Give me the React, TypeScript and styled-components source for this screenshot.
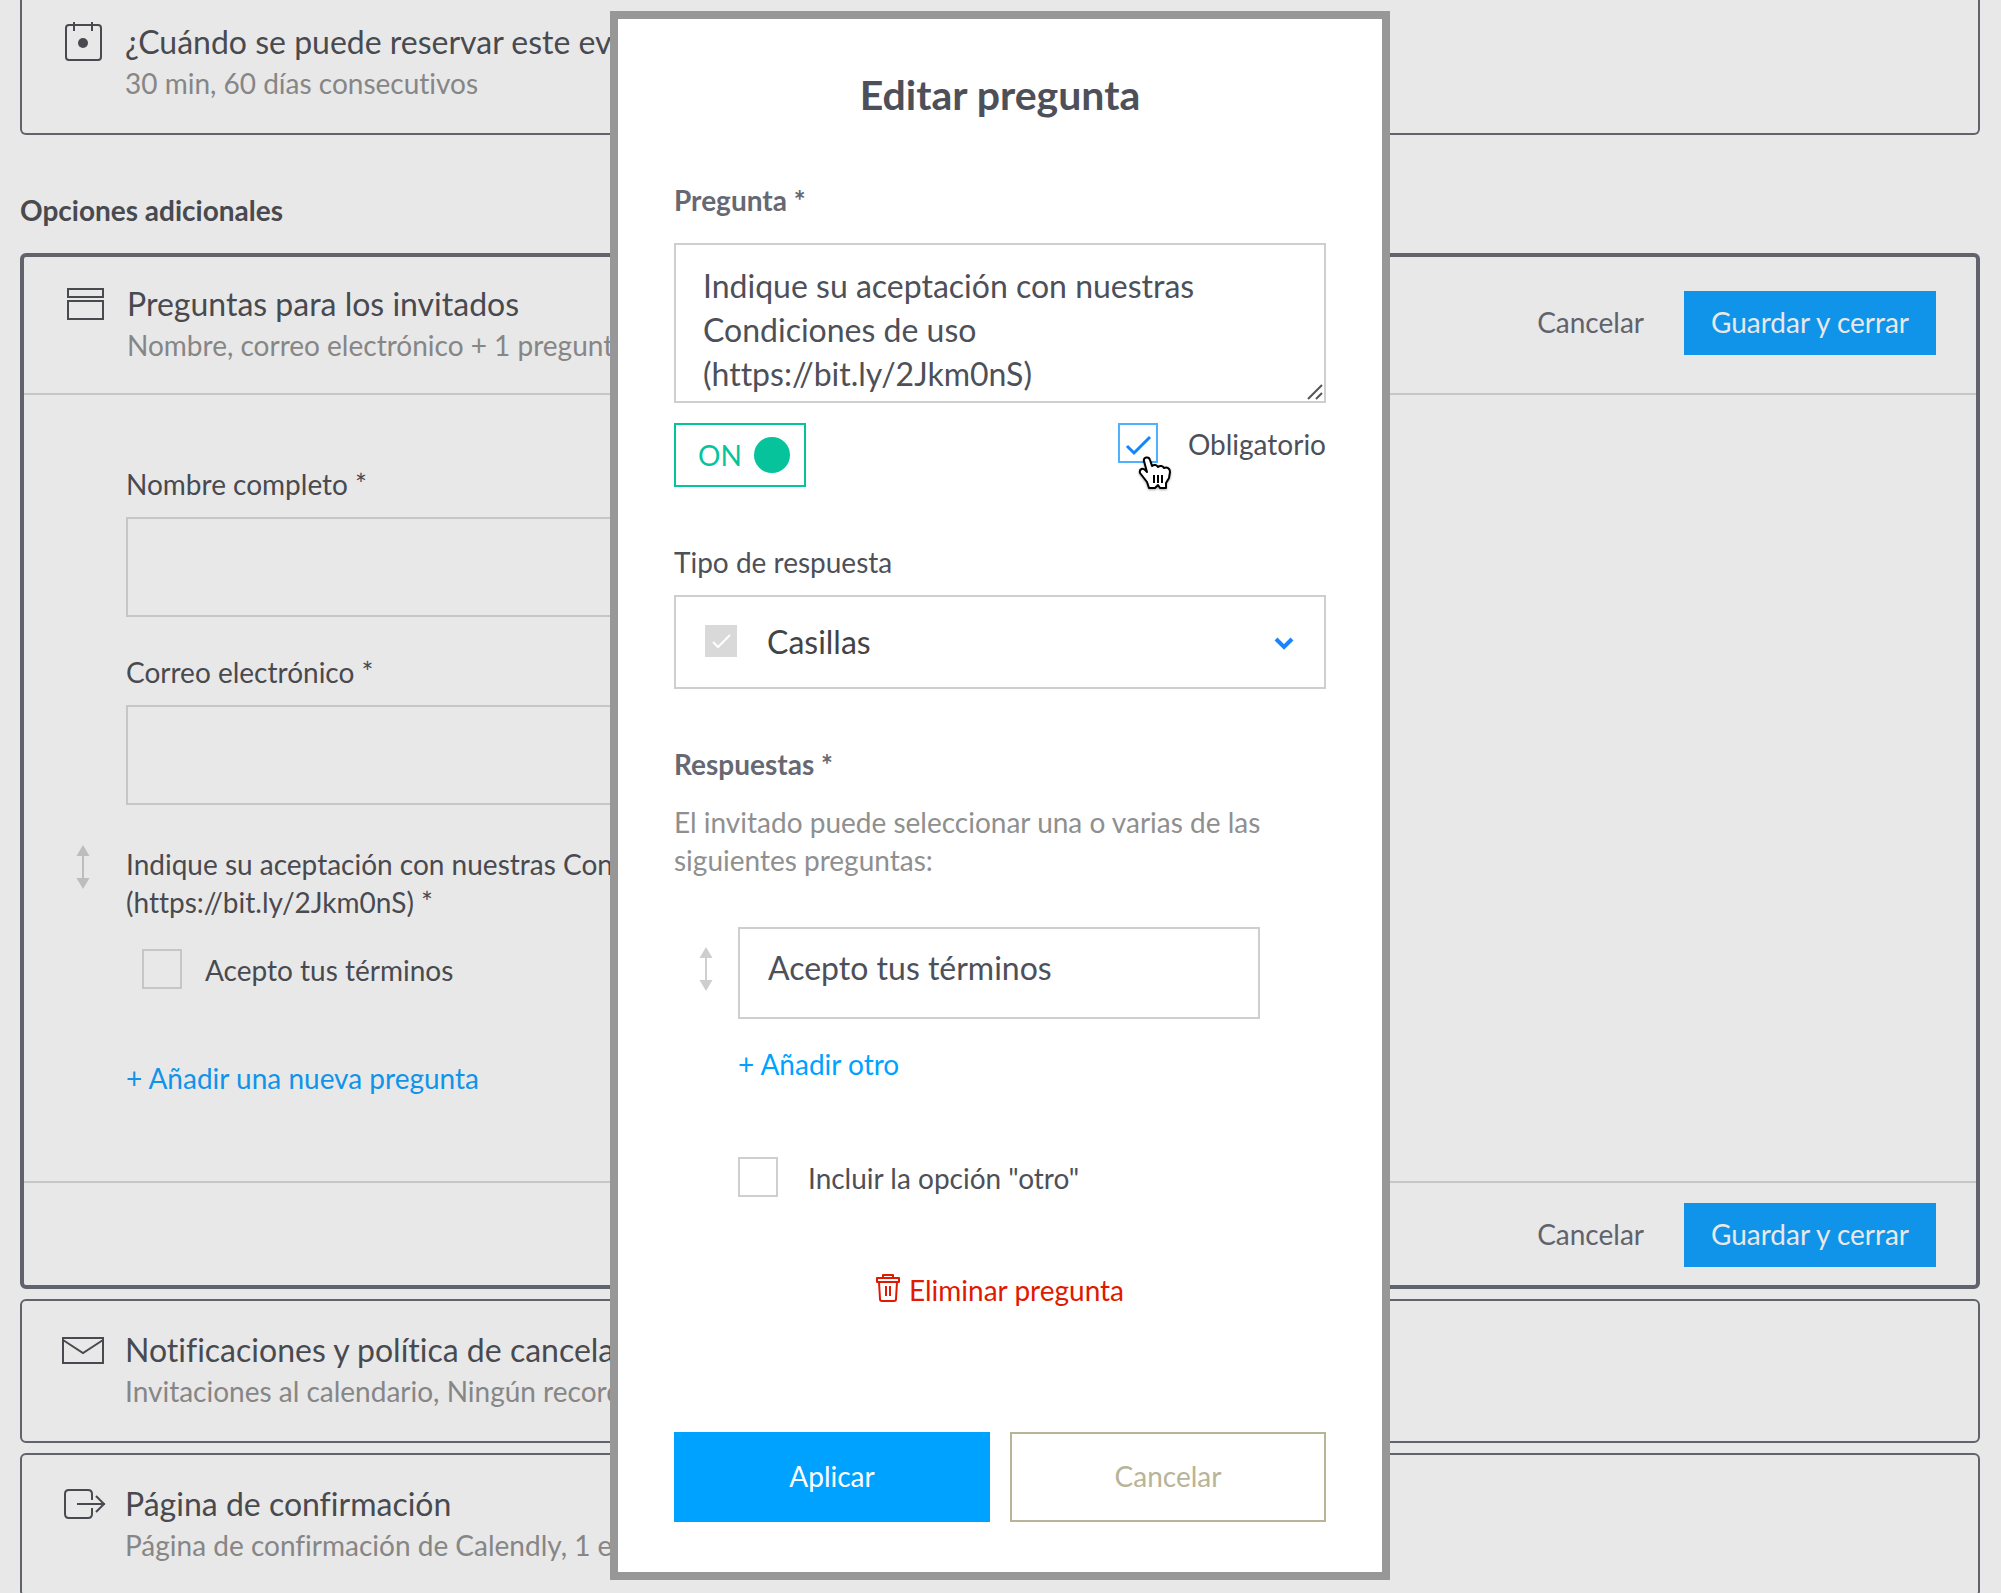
import React from "react";
import styled, { createGlobalStyle, css } from "styled-components";

const GlobalStyle = createGlobalStyle`
  *, *::before, *::after { box-sizing: border-box; }
  body {
    margin: 0;
    background: #e8e8e8;
    color: #484a50;
    font-family: Lato, "Liberation Sans", sans-serif;
    font-size: 28px;
    line-height: 38px;
    font-variant-ligatures: none;
  }
  button, input, select, textarea { font: inherit; color: inherit; margin: 0; border-radius: 0; }
  h1, h2, h3, p { margin: 0; font-weight: 400; }
`;

/* ---------- Page behind the dialog ---------- */

const Page = styled.main`
  height: 100vh;
  overflow: hidden;
  padding: 0 21px 0 20px;
`;

const Card = styled.section<{ $active?: boolean; $cutTop?: boolean }>`
  border: ${(p) => (p.$active ? 4 : 2)}px solid #60626c;
  border-radius: 6px;
  margin-bottom: 10px;
  ${(p) =>
    p.$cutTop &&
    css`
      border-top: 0;
      border-top-left-radius: 0;
      border-top-right-radius: 0;
      margin-bottom: 0;
    `}
`;

const CardHeader = styled.header<{ $variant?: "active" | "cut" }>`
  display: flex;
  align-items: center;
  gap: 19px;
  padding: ${(p) =>
    p.$variant === "active"
      ? "24px 40px 29px"
      : p.$variant === "cut"
        ? "19px 40px 31px"
        : "26px 40px 31px"};
  ${(p) => p.$variant === "active" && "border-bottom: 2px solid #c6c6c6;"}
`;

const CardIcon = styled.svg`
  flex: none;
  align-self: flex-start;
  width: 44px;
  height: 44px;
  fill: none;
  stroke: #484a50;
  stroke-width: 2;
`;

const CardHeading = styled.div`
  flex: 1;
  min-width: 0;
  padding-top: 1px;
`;

const CardTitle = styled.h3`
  font-size: 32px;
  line-height: 44px;
`;

const CardSummary = styled.p`
  color: #868686;
`;

const SectionTitle = styled.h2`
  margin: 56px 0 24px;
  font-size: 28px;
  font-weight: 700;
`;

const Actions = styled.div`
  display: flex;
  align-items: center;
  gap: 40px;
`;

const PlainButton = styled.button`
  border: 0;
  padding: 0 0 2px;
  background: none;
  color: #60626c;
  cursor: pointer;
`;

const SaveButton = styled.button`
  min-width: 252px;
  height: 64px;
  border: 0;
  padding: 0 24px 2px;
  background: #0f94ea;
  color: #e8e8e8;
  cursor: pointer;
`;

const CardBody = styled.div`
  display: flex;
  flex-direction: column;
  gap: 36px;
  padding: 70px 0 84px;
`;

const FormRow = styled.div`
  display: grid;
  grid-template-columns: 102px minmax(0, 850px);
`;

const HandleCell = styled.div`
  padding: 4px 0 0 52px;
`;

const FieldCell = styled.div`
  display: flex;
  flex-direction: column;
  gap: 14px;
  grid-column: 2;
`;

const PageInput = styled.input`
  height: 100px;
  border: 2px solid #c6c6c6;
  padding: 0 28px;
  background: transparent;
`;

const QuestionCell = styled.div`
  display: flex;
  flex-direction: column;
  align-items: flex-start;
  gap: 28px;
  padding-top: 4px;
`;

const QuestionOption = styled.div`
  display: flex;
  padding-left: 16px;
`;

const LinkRow = styled.div`
  grid-column: 2;
  padding-top: 34px;
`;

const LinkButton = styled.button<{ $muted?: boolean }>`
  display: block;
  border: 0;
  padding: 0;
  background: none;
  color: ${(p) => (p.$muted ? "#0f94ea" : "#00a2ff")};
  cursor: pointer;
`;

const CardFooter = styled.footer`
  display: flex;
  justify-content: flex-end;
  border-top: 2px solid #c6c6c6;
  padding: 20px 40px 18px;
`;

/* ---------- Shared controls ---------- */

const HandleSvg = styled.svg<{ $light?: boolean }>`
  display: block;
  width: 14px;
  height: 44px;
  color: ${(p) => (p.$light ? "#cecece" : "#bdbdbd")};
`;

function DragHandle({ light }: { light?: boolean }) {
  return (
    <HandleSvg $light={light} viewBox="0 0 14 44" aria-hidden="true">
      <path d="M7 0l6.500 11H.5zM7 44l6.500-11H.5z" fill="currentColor" />
      <path d="M7 10v24" stroke="currentColor" strokeWidth="2" />
    </HandleSvg>
  );
}

const CheckLabel = styled.label<{ $gap: number }>`
  display: inline-flex;
  align-items: center;
  gap: ${(p) => p.$gap}px;
  cursor: pointer;
`;

const BoxStack = styled.span`
  display: grid;
  flex: none;
  width: 40px;
  height: 40px;
  & > * { grid-area: 1 / 1; }
`;

const BoxInput = styled.input<{ $dim?: boolean }>`
  appearance: none;
  width: 40px;
  height: 40px;
  border: 2px solid ${(p) => (p.$dim ? "#c6c6c6" : "#cecece")};
  background: transparent;
  cursor: pointer;
  &:checked { border-color: #4db1ff; }
  & + svg { visibility: hidden; }
  &:checked + svg { visibility: visible; }
`;

const BoxTick = styled.svg`
  width: 40px;
  height: 40px;
  fill: none;
  stroke: #0f85ff;
  stroke-width: 3;
  pointer-events: none;
`;

const CheckText = styled.span`
  padding-top: 2px;
`;

function Checkbox(props: { label: string; gap: number; checked?: boolean; dim?: boolean }) {
  return (
    <CheckLabel $gap={props.gap}>
      <BoxStack>
        <BoxInput type="checkbox" defaultChecked={props.checked} $dim={props.dim} />
        <BoxTick viewBox="0 0 40 40" aria-hidden="true">
          <path d="M9 23l7 7L32 14" />
        </BoxTick>
      </BoxStack>
      <CheckText>{props.label}</CheckText>
    </CheckLabel>
  );
}

/* ---------- Dialog ---------- */

const Overlay = styled.div`
  position: absolute;
  inset: 0;
  display: flex;
  justify-content: center;
  align-items: flex-start;
  padding: 11px 1px 0 0;
  overflow: hidden;
`;

const Dialog = styled.form`
  display: flex;
  flex-direction: column;
  width: 780px;
  max-width: 100%;
  border: 8px solid #979797;
  padding: 54px 56px 50px;
  background: #fff;
  color: #4d5058;
`;

const DialogTitle = styled.h1`
  margin-bottom: 64px;
  font-size: 41px;
  line-height: 44px;
  font-weight: 700;
  text-align: center;
`;

const FieldLabel = styled.label<{ $strong?: boolean }>`
  align-self: flex-start;
  ${(p) => p.$strong && "color: #666872; font-weight: 700;"}
`;

const TextBox = styled.div`
  position: relative;
  display: flex;
  margin: 24px 0 20px;
`;

const QuestionText = styled.textarea`
  width: 100%;
  height: 160px;
  border: 2px solid #cecece;
  padding: 19px 27px 5px;
  background: #fff;
  font-size: 32px;
  line-height: 44px;
  resize: none;
  overflow: hidden;
`;

const Grip = styled.svg`
  position: absolute;
  right: 3px;
  bottom: 3px;
  width: 16px;
  height: 16px;
  stroke: #555;
  stroke-width: 2;
  pointer-events: none;
`;

const SettingsRow = styled.div`
  position: relative;
  display: flex;
  justify-content: space-between;
  align-items: flex-start;
  margin-bottom: 56px;
`;

const Switch = styled.button`
  display: flex;
  align-items: center;
  justify-content: space-between;
  width: 132px;
  height: 64px;
  border: 2px solid #06c39b;
  padding: 0 14px 0 22px;
  background: #fff;
  color: #06c39b;
  cursor: pointer;
`;

const SwitchKnob = styled.span`
  width: 36px;
  height: 36px;
  border-radius: 50%;
  background: #06c39b;
`;

const Pointer = styled.svg`
  position: absolute;
  top: 33px;
  right: 154px;
  width: 34px;
  height: 36px;
  filter: drop-shadow(0 1px 1px rgba(0, 0, 0, 0.35));
  pointer-events: none;
`;

const SelectBox = styled.div`
  display: grid;
  align-items: center;
  margin: 14px 0 56px;
  & > * { grid-area: 1 / 1; }
`;

const TypeSelect = styled.select`
  appearance: none;
  width: 100%;
  height: 94px;
  border: 2px solid #cecece;
  padding: 0 80px 0 91px;
  background: #fff;
  color: #444;
  font-size: 32px;
  cursor: pointer;
`;

const TypeIcon = styled.svg`
  width: 32px;
  height: 32px;
  margin: 0 0 2px 31px;
  pointer-events: none;
`;

const Chevron = styled.svg`
  justify-self: end;
  width: 20px;
  height: 14px;
  margin: 4px 32px 0 0;
  fill: none;
  stroke: #1a85ff;
  stroke-width: 4;
  pointer-events: none;
`;

const Help = styled.p`
  margin: 20px 0 48px;
  color: #8f8f8f;
`;

const AnswerList = styled.div`
  display: grid;
  grid-template-columns: 64px minmax(0, 522px);
  row-gap: 26px;
`;

const AnswerHandle = styled.div`
  padding: 20px 0 0 25px;
`;

const AnswerInput = styled.input`
  height: 92px;
  border: 2px solid #cecece;
  padding: 0 28px 12px;
  background: #fff;
  font-size: 32px;
`;

const AnswerExtras = styled.div`
  display: flex;
  flex-direction: column;
  align-items: flex-start;
  gap: 74px;
  grid-column: 2;
`;

const DeleteButton = styled.button`
  display: flex;
  align-items: center;
  align-self: center;
  gap: 9px;
  margin: 74px 0 123px;
  border: 0;
  padding: 0;
  background: none;
  color: #e11900;
  cursor: pointer;
`;

const TrashIcon = styled.svg`
  width: 24px;
  height: 28px;
  margin-bottom: 4px;
  fill: none;
  stroke: currentColor;
  stroke-width: 2;
  stroke-linejoin: round;
`;

const DialogActions = styled.div`
  display: grid;
  grid-template-columns: 1fr 1fr;
  gap: 20px;
`;

const DialogButton = styled.button<{ $primary?: boolean }>`
  height: 90px;
  border: 2px solid ${(p) => (p.$primary ? "#00a2ff" : "#b8b497")};
  padding: 0 0 2px;
  background: ${(p) => (p.$primary ? "#00a2ff" : "#fff")};
  color: ${(p) => (p.$primary ? "#fff" : "#b8b497")};
  cursor: pointer;
`;

function SaveActions() {
  return (
    <Actions>
      <PlainButton type="button">Cancelar</PlainButton>
      <SaveButton type="button">Guardar y cerrar</SaveButton>
    </Actions>
  );
}

function EditQuestionDialog() {
  return (
    <Overlay>
      <Dialog role="dialog" aria-labelledby="dialog-title" onSubmit={(e) => e.preventDefault()}>
        <DialogTitle id="dialog-title">Editar pregunta</DialogTitle>

        <FieldLabel $strong htmlFor="question">Pregunta *</FieldLabel>
        <TextBox>
          <QuestionText
            id="question"
            defaultValue={"Indique su aceptación con nuestras Condiciones de uso (https://bit.ly/2Jkm0nS)"}
          />
          <Grip viewBox="0 0 16 16" aria-hidden="true">
            <path d="M1 15L15 1M9 15l6-6" />
          </Grip>
        </TextBox>

        <SettingsRow>
          <Switch type="button" role="switch" aria-checked="true">
            ON
            <SwitchKnob />
          </Switch>
          <Checkbox label="Obligatorio" gap={30} checked />
          <Pointer viewBox="0 0 34 36" aria-hidden="true">
            <path
              d="M6 5C5 1 11 0 12 4l2 6c2-2 5-1 6 1 2-2 5-1 6 1 3-1 6 0 6 4l-1 6-3 5v5h-6l-2-3-3 3h-6l-2-6-7-9c-1-4 3-6 6-2l1 1z"
              fill="#fff"
              stroke="#000"
              strokeWidth="2"
              strokeLinejoin="round"
            />
            <path d="M16 19v8M20 19v8M24 19v8" stroke="#000" strokeWidth="2" />
          </Pointer>
        </SettingsRow>

        <FieldLabel htmlFor="answer-type">Tipo de respuesta</FieldLabel>
        <SelectBox>
          <TypeSelect id="answer-type" defaultValue="Casillas">
            <option>Casillas</option>
          </TypeSelect>
          <TypeIcon viewBox="0 0 32 32" aria-hidden="true">
            <path d="M0 0h32v32H0z" fill="#d9d9d9" />
            <path d="M8 17l5 5L25 10" fill="none" stroke="#fff" strokeWidth="2" />
          </TypeIcon>
          <Chevron viewBox="0 0 20 14" aria-hidden="true">
            <path d="M2 2l8 8 8-8" />
          </Chevron>
        </SelectBox>

        <FieldLabel $strong htmlFor="answer-1">Respuestas *</FieldLabel>
        <Help>El invitado puede seleccionar una o varias de las siguientes preguntas:</Help>

        <AnswerList>
          <AnswerHandle>
            <DragHandle light />
          </AnswerHandle>
          <AnswerInput id="answer-1" defaultValue="Acepto tus términos" />
          <AnswerExtras>
            <LinkButton type="button">+ Añadir otro</LinkButton>
            <Checkbox label={'Incluir la opción "otro"'} gap={30} />
          </AnswerExtras>
        </AnswerList>

        <DeleteButton type="button">
          <TrashIcon viewBox="0 0 24 28" aria-hidden="true">
            <path d="M1 4h22v4H1zM7 4V1h10v3M3 8l1 17q0 2 2 2h12q2 0 2-2l1-17M10 12v10M14 12v10" />
          </TrashIcon>
          Eliminar pregunta
        </DeleteButton>

        <DialogActions>
          <DialogButton $primary type="submit">Aplicar</DialogButton>
          <DialogButton type="button">Cancelar</DialogButton>
        </DialogActions>
      </Dialog>
    </Overlay>
  );
}

export default function App() {
  return (
    <>
      <GlobalStyle />
      <Page>
        <Card $cutTop>
          <CardHeader $variant="cut">
            <CardIcon viewBox="0 0 44 44" aria-hidden="true">
              <rect x="4" y="6" width="35" height="35" rx="3" />
              <path d="M12 3v9M30 3v9" />
              <circle cx="21" cy="24" r="5" fill="#484a50" stroke="none" />
            </CardIcon>
            <CardHeading>
              <CardTitle>¿Cuándo se puede reservar este evento?</CardTitle>
              <CardSummary>30 min, 60 días consecutivos</CardSummary>
            </CardHeading>
          </CardHeader>
        </Card>

        <SectionTitle>Opciones adicionales</SectionTitle>

        <Card $active>
          <CardHeader $variant="active">
            <CardIcon viewBox="0 0 44 44" aria-hidden="true">
              <path d="M4 8h35v8H4zM4 20h35v18H4z" />
            </CardIcon>
            <CardHeading>
              <CardTitle>Preguntas para los invitados</CardTitle>
              <CardSummary>Nombre, correo electrónico + 1 pregunta</CardSummary>
            </CardHeading>
            <SaveActions />
          </CardHeader>

          <CardBody>
            <FormRow>
              <FieldCell>
                <label htmlFor="full-name">Nombre completo *</label>
                <PageInput id="full-name" />
              </FieldCell>
            </FormRow>
            <FormRow>
              <FieldCell>
                <label htmlFor="email">Correo electrónico *</label>
                <PageInput id="email" type="email" />
              </FieldCell>
            </FormRow>
            <FormRow>
              <HandleCell>
                <DragHandle />
              </HandleCell>
              <QuestionCell>
                <p>Indique su aceptación con nuestras Condiciones de uso (https://bit.ly/2Jkm0nS) *</p>
                <QuestionOption>
                  <Checkbox label="Acepto tus términos" gap={23} dim />
                </QuestionOption>
              </QuestionCell>
            </FormRow>
            <FormRow>
              <LinkRow>
                <LinkButton $muted type="button">+ Añadir una nueva pregunta</LinkButton>
              </LinkRow>
            </FormRow>
          </CardBody>

          <CardFooter>
            <SaveActions />
          </CardFooter>
        </Card>

        <Card>
          <CardHeader>
            <CardIcon viewBox="0 0 44 44" aria-hidden="true">
              <path d="M1 11h40v25H1zM1 13l20 13 20-13" />
            </CardIcon>
            <CardHeading>
              <CardTitle>Notificaciones y política de cancelación</CardTitle>
              <CardSummary>Invitaciones al calendario, Ningún recordatorio</CardSummary>
            </CardHeading>
          </CardHeader>
        </Card>

        <Card>
          <CardHeader>
            <CardIcon viewBox="0 0 44 44" aria-hidden="true">
              <path d="M30 19v-6q0-4-4-4H7q-4 0-4 4v20q0 4 4 4h19q4 0 4-4v-6M15 23h28M34 15l8 8-8 8" />
            </CardIcon>
            <CardHeading>
              <CardTitle>Página de confirmación</CardTitle>
              <CardSummary>Página de confirmación de Calendly, 1 enlace</CardSummary>
            </CardHeading>
          </CardHeader>
        </Card>
      </Page>
      <EditQuestionDialog />
    </>
  );
}
